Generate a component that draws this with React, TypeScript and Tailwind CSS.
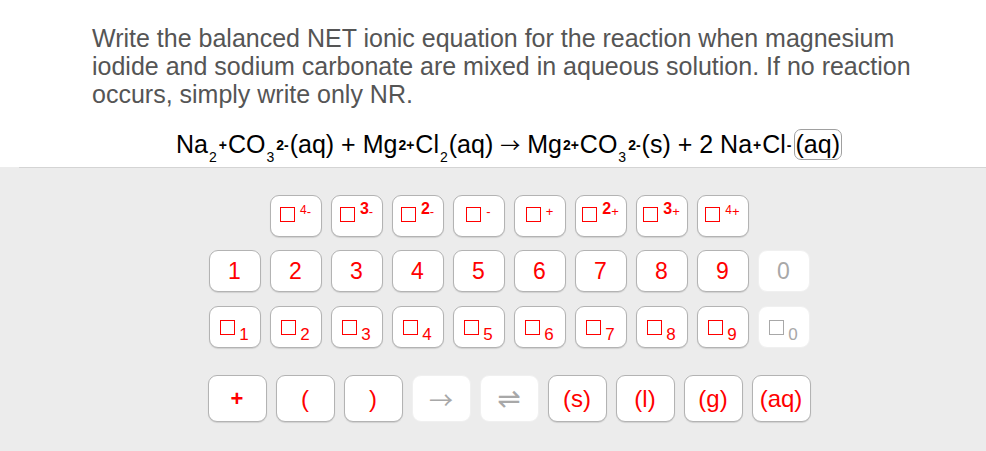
import React from "react";

const FONT = "font-['Liberation_Sans',Arial,sans-serif]";

function Key({
  w,
  h,
  disabled,
  children,
}: {
  w: string;
  h: string;
  disabled?: boolean;
  children: React.ReactNode;
}) {
  return (
    <div
      className={`${w} ${h} shrink-0 rounded-[9px] bg-white flex items-center justify-center ${
        disabled
          ? "border border-[#f0f0f0] text-[#a8a8a8]"
          : "border border-[#b3b3b3] shadow-[0_1px_1px_rgba(0,0,0,0.12)] text-[#ff0000]"
      }`}
    >
      {children}
    </div>
  );
}

function Box({ gray }: { gray?: boolean }) {
  return (
    <span
      className={`inline-block w-[15px] h-[15px] border-[1.5px] ${
        gray ? "border-[#a8a8a8]" : "border-[#ff0000]"
      }`}
    />
  );
}

function Charge({ d, s }: { d: string; s: string }) {
  const big = d === "2" || d === "3";
  return (
    <div className="flex items-start">
      <span className="mt-[1px]">
        <Box />
      </span>
      <span className="ml-[5px] flex items-start leading-none">
        {d && (
          <span
            className={
              big
                ? "text-[16px] font-bold relative top-[-3px]"
                : "text-[12px] relative top-[0px]"
            }
          >
            {d}
          </span>
        )}
        <span className="text-[13px] relative top-[1px]">{s}</span>
      </span>
    </div>
  );
}

function Sub({ d, gray }: { d: string; gray?: boolean }) {
  return (
    <div className="flex items-center">
      <Box gray={gray} />
      <span className="ml-[4px] text-[17px] leading-none relative top-[7px]">{d}</span>
    </div>
  );
}

const S = ({ children }: { children: React.ReactNode }) => (
  <span className="text-[14px] mx-[1px] leading-none relative top-[9px]">{children}</span>
);
const P = ({ children }: { children: React.ReactNode }) => (
  <span className="text-[14px] mx-[1px] leading-none font-bold relative top-[-3px]">{children}</span>
);

export default function App() {
  const charges: [string, string][] = [
    ["4", "-"],
    ["3", "-"],
    ["2", "-"],
    ["", "-"],
    ["", "+"],
    ["2", "+"],
    ["3", "+"],
    ["4", "+"],
  ];
  const digits = ["1", "2", "3", "4", "5", "6", "7", "8", "9"];
  return (
    <div className={`w-[986px] h-[451px] bg-white flex flex-col overflow-hidden ${FONT}`}>
      <div className="pl-[92px] pt-[24px] text-[25px] leading-[28px] text-[#555555]">
        Write the balanced NET ionic equation for the reaction when magnesium
        <br />
        iodide and sodium carbonate are mixed in aqueous solution. If no reaction
        <br />
        occurs, simply write only NR.
      </div>
      <div className="pl-[176px] mt-[20px] h-[32px] text-[25px] leading-[32px] text-black whitespace-nowrap flex items-center">
        <span>
          Na<S>2</S>
          <P>+</P>CO<S>3</S>
          <P>2-</P>(aq) + Mg<P>2+</P>Cl<S>2</S>(aq){" "}
          <span className="font-['Noto_Sans_CJK_JP',sans-serif] text-[20px]">→</span> Mg<P>2+</P>CO<S>3</S>
          <P>2-</P>(s) + 2 Na<P>+</P>Cl<P>-</P>
        </span>
        <span className="ml-[1px] rounded-[7px] border border-[#a0a0a0] px-[1px] leading-[29px]">(aq)</span>
      </div>
      <div className="flex-1 mt-[7px] bg-[#ececec]">
        <div className="ml-[19px] h-px bg-[#d4d4d4]" />
        <div className="ml-[208px] w-[602px] flex flex-col items-center pt-[27px]">
          <div className="flex gap-[9px]">
            {charges.map(([d, s], i) => (
              <Key key={i} w="w-[52px]" h="h-[42px]">
                <Charge d={d} s={s} />
              </Key>
            ))}
          </div>
          <div className="flex gap-[9px] mt-[13px]">
            {digits.map((d) => (
              <Key key={d} w="w-[52px]" h="h-[42px]">
                <span className="text-[23px]">{d}</span>
              </Key>
            ))}
            <Key w="w-[52px]" h="h-[42px]" disabled>
              <span className="text-[23px]">0</span>
            </Key>
          </div>
          <div className="flex gap-[9px] mt-[14px]">
            {digits.map((d) => (
              <Key key={d} w="w-[52px]" h="h-[42px]">
                <Sub d={d} />
              </Key>
            ))}
            <Key w="w-[52px]" h="h-[42px]" disabled>
              <Sub d="0" gray />
            </Key>
          </div>
          <div className="flex gap-[9px] mt-[27px]">
            <Key w="w-[59px]" h="h-[47px]">
              <span className="text-[22px] font-bold">+</span>
            </Key>
            <Key w="w-[59px]" h="h-[47px]">
              <span className="text-[24px]">(</span>
            </Key>
            <Key w="w-[59px]" h="h-[47px]">
              <span className="text-[24px]">)</span>
            </Key>
            <Key w="w-[59px]" h="h-[47px]" disabled>
              <span className="text-[24px] font-['Noto_Sans_CJK_JP',sans-serif]">→</span>
            </Key>
            <Key w="w-[59px]" h="h-[47px]" disabled>
              <span className="text-[28px] font-['DejaVu_Sans',sans-serif]">⇌</span>
            </Key>
            <Key w="w-[59px]" h="h-[47px]">
              <span className="text-[24px]">(s)</span>
            </Key>
            <Key w="w-[59px]" h="h-[47px]">
              <span className="text-[24px]">(l)</span>
            </Key>
            <Key w="w-[59px]" h="h-[47px]">
              <span className="text-[24px]">(g)</span>
            </Key>
            <Key w="w-[59px]" h="h-[47px]">
              <span className="text-[24px]">(aq)</span>
            </Key>
          </div>
        </div>
      </div>
    </div>
  );
}
